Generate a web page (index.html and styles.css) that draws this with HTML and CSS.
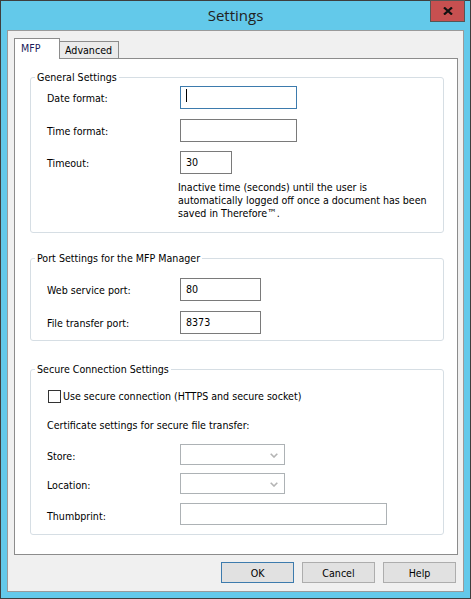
FILE: index.html
```html
<!DOCTYPE html>
<html lang="en">
  <head>
    <meta charset="UTF-8" />
    <title>Settings</title>
    <link rel="stylesheet" href="styles.css">
  </head>
  <body>
    <div class="window">
      <div class="titlebar">
        <span class="title">Settings</span>
        <button class="close-btn" title="Close">
          <svg width="10" height="8" viewBox="0 0 10 8">
            <path d="M1 0.5 L9 7.5 M9 0.5 L1 7.5" stroke="#111" stroke-width="2.2" fill="none" />
          </svg>
        </button>
      </div>

      <div class="client">
        <div class="tabs">
          <div class="tab active">MFP</div>
          <div class="tab">Advanced</div>
        </div>

        <div class="panel">
          <fieldset class="group general">
            <legend>General Settings</legend>
            <div class="row first">
              <label>Date format:</label>
              <div class="field focused wide"><span class="caret"></span></div>
            </div>
            <div class="row">
              <label>Time format:</label>
              <div class="field wide"></div>
            </div>
            <div class="row tight">
              <label>Timeout:</label>
              <div class="field short">30</div>
            </div>
            <p class="hint">
              Inactive time (seconds) until the user is<br>
              automatically logged off once a document has been<br>
              saved in Therefore™.
            </p>
          </fieldset>

          <fieldset class="group ports">
            <legend>Port Settings for the MFP Manager</legend>
            <div class="row first">
              <label>Web service port:</label>
              <div class="field port">80</div>
            </div>
            <div class="row">
              <label>File transfer port:</label>
              <div class="field port">8373</div>
            </div>
          </fieldset>

          <fieldset class="group secure">
            <legend>Secure Connection Settings</legend>
            <div class="check-row">
              <span class="checkbox"></span>
              <span>Use secure connection (HTTPS and secure socket)</span>
            </div>
            <p class="cert-note">Certificate settings for secure file transfer:</p>
            <div class="row combo-row">
              <label>Store:</label>
              <div class="field combo disabled">
                <svg width="8" height="5" viewBox="0 0 8 5">
                  <polyline points="0.7,0.7 4,4 7.3,0.7" stroke="#b4b4b4" stroke-width="1.6" fill="none" />
                </svg>
              </div>
            </div>
            <div class="row loc-row">
              <label>Location:</label>
              <div class="field combo disabled">
                <svg width="8" height="5" viewBox="0 0 8 5">
                  <polyline points="0.7,0.7 4,4 7.3,0.7" stroke="#b4b4b4" stroke-width="1.6" fill="none" />
                </svg>
              </div>
            </div>
            <div class="row thumb-row">
              <label>Thumbprint:</label>
              <div class="field thumb disabled"></div>
            </div>
          </fieldset>
        </div>

        <div class="buttons">
          <button class="dlg-btn default">OK</button>
          <button class="dlg-btn">Cancel</button>
          <button class="dlg-btn">Help</button>
        </div>
      </div>
    </div>
  </body>
</html>
```

FILE: styles.css
```css
body {
  margin: 0;
  padding: 0;
  font-family: "DejaVu Sans Condensed", "DejaVu Sans", sans-serif;
  font-stretch: condensed;
  font-size: 10.6px;
  color: #000;
}
.window {
  width: 471px;
  height: 599px;
  box-sizing: border-box;
  border: 1px solid #3e3e3e;
  background: #63c9ea;
  padding: 0 6px 6px 6px;
}
.titlebar {
  position: relative;
  height: 29px;
  text-align: center;
}
.title {
  font-family: "Open Sans", "Noto Sans", sans-serif;
  font-stretch: normal;
  font-size: 15px;
  line-height: 29px;
  color: #222;
}
.close-btn {
  position: absolute;
  top: -1px;
  right: -1px;
  width: 35px;
  height: 22px;
  padding: 0;
  border: 1px solid #555;
  background: #c75050;
  display: flex;
  align-items: center;
  justify-content: center;
}
.client {
  height: 562px;
  box-sizing: border-box;
  border: 1px solid #9a9a9a;
  background: #f0f0f0;
  padding: 7px 0 0 0;
}
.tabs {
  display: flex;
  align-items: flex-end;
  margin-left: 6px;
  height: 20px;
  position: relative;
  z-index: 1;
}
.tab {
  box-sizing: border-box;
  border: 1px solid #8c8c8c;
  border-bottom: none;
  background: #ebebeb;
  height: 17px;
  width: 60px;
  margin-left: -1px;
  padding: 1px 0 0 5px;
  line-height: 14px;
}
.tab.active {
  background: #fff;
  height: 21px;
  width: 46px;
  margin-left: 0;
  margin-bottom: -1px;
  padding: 1px 0 0 6px;
  line-height: 16px;
  color: #1a1a5a;
}
.panel {
  margin-left: 6px;
  width: 444px;
  height: 497px;
  box-sizing: border-box;
  border: 1px solid #8c8c8c;
  background: #fff;
  padding: 12px 13px 0 15px;
}
.group {
  margin: 0;
  padding: 0;
  border: 1px solid #d6dee4;
  border-radius: 3px;
  min-width: 0;
}
.group legend {
  margin-left: 4px;
  padding: 0 2px;
  line-height: 13px;
}
.row {
  display: flex;
  align-items: center;
  margin: 10px 0 0 16px;
}
.row label {
  width: 133px;
}
.row.first {
  margin-top: 2px;
}
.row.tight {
  margin-top: 9px;
}
.field {
  box-sizing: border-box;
  height: 23px;
  border: 1px solid #7a7a7a;
  background: #fff;
  padding: 0 5px;
  line-height: 21px;
  position: relative;
}
.field.focused {
  border-color: #3d7bad;
}
.field.wide {
  width: 117px;
}
.field.short {
  width: 52px;
}
.field.port {
  width: 81px;
}
.caret {
  display: block;
  width: 1px;
  height: 13px;
  margin-top: 2px;
  background: #000;
}
.hint {
  margin: 7px 0 0 147px;
  line-height: 13px;
}
.general {
  padding-bottom: 12px;
}
.ports {
  margin-top: 19px;
  padding-bottom: 6px;
}
.ports .row.first {
  margin-top: 13px;
}
.secure {
  margin-top: 22px;
  padding-bottom: 9px;
}
.check-row {
  display: flex;
  align-items: center;
  gap: 2px;
  margin: 14px 0 0 17px;
  line-height: 13px;
}
.checkbox {
  width: 13px;
  height: 13px;
  box-sizing: border-box;
  border: 1px solid #333;
  background: #fff;
}
.cert-note {
  margin: 16px 0 0 16px;
  line-height: 13px;
}
.field.disabled {
  border-color: #adb2b5;
}
.field.combo {
  width: 105px;
  height: 21px;
  display: flex;
  align-items: center;
  justify-content: flex-end;
  padding: 1px 6px 0 0;
}
.field.thumb {
  width: 207px;
  height: 22px;
}
.combo-row {
  margin-top: 12px;
}
.loc-row {
  margin-top: 8px;
}
.thumb-row {
  margin-top: 9px;
}
.combo-row label,
.loc-row label,
.thumb-row label {
  padding-top: 3px;
}
.buttons {
  display: flex;
  justify-content: flex-end;
  gap: 8px;
  margin: 7px 7px 0 0;
}
.dlg-btn {
  width: 73px;
  height: 21px;
  padding: 0;
  border: 1px solid #adadad;
  background: #e1e1e1;
  font-family: inherit;
  font-stretch: condensed;
  font-size: 10.6px;
  color: #000;
}
.dlg-btn.default {
  border-color: #3d7bad;
}
```
